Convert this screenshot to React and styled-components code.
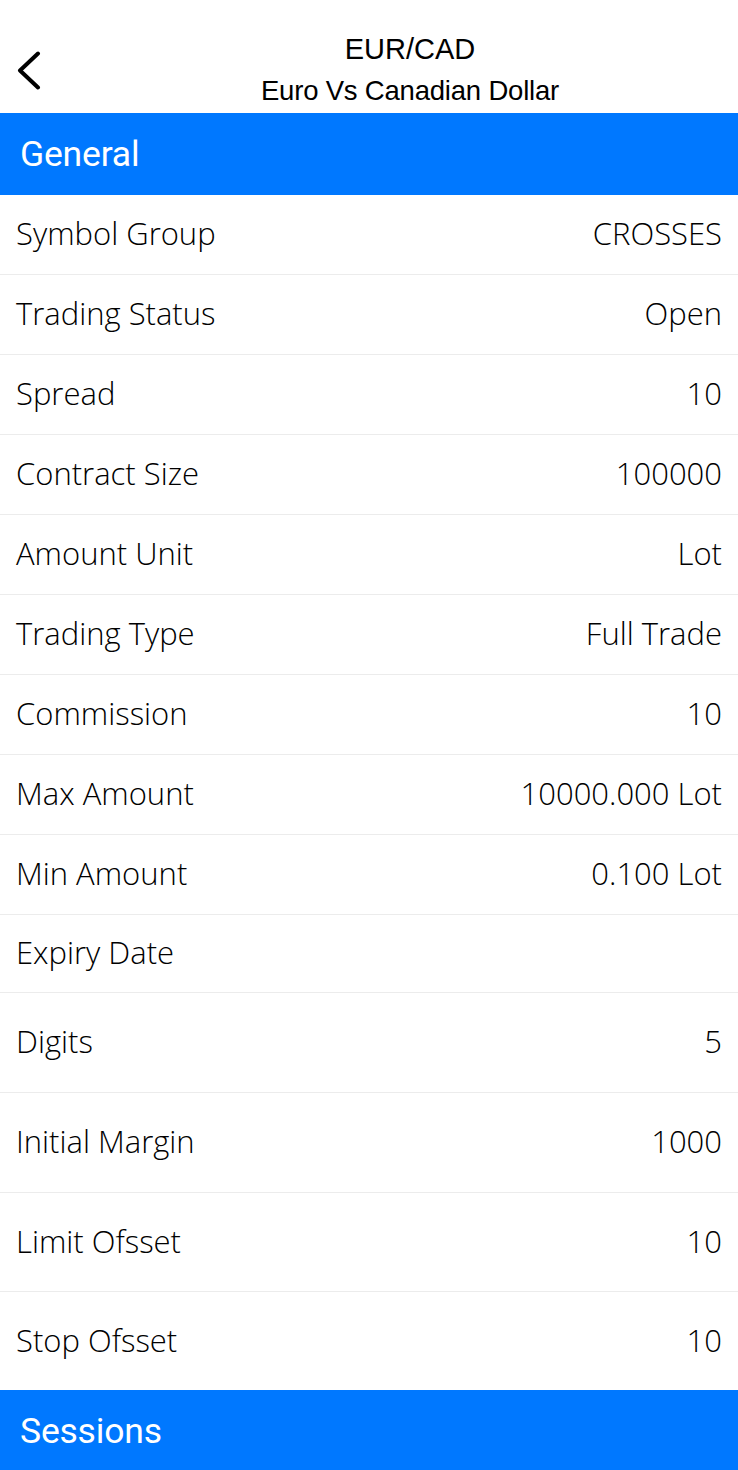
import React from 'react';
import styled, { createGlobalStyle } from 'styled-components';

const GlobalStyle = createGlobalStyle`
  html, body {
    margin: 0;
    padding: 0;
    background: #ffffff;
  }
  body {
    font-family: 'Open Sans', 'Noto Sans', sans-serif;
    color: #000;
  }
`;

const Screen = styled.div`
  width: 738px;
  height: 1470px;
  overflow: hidden;
  display: flex;
  flex-direction: column;
  background: #fff;
`;

const NavBar = styled.div`
  height: 113px;
  flex-shrink: 0;
  display: flex;
  align-items: stretch;
  padding-top: 28px;
  box-sizing: border-box;
`;

const BackButton = styled.button`
  width: 82px;
  border: 0;
  background: none;
  padding: 0 0 0 16px;
  display: flex;
  align-items: center;
  cursor: pointer;
`;

const TitleBlock = styled.div`
  flex: 1;
  display: flex;
  flex-direction: column;
  align-items: center;
  justify-content: center;
  font-family: 'Liberation Sans', Arial, sans-serif;
  color: #000;
`;

const Title = styled.div`
  font-size: 29px;
  line-height: 36px;
`;

const Subtitle = styled.div`
  margin-top: 4px;
  font-size: 27.5px;
  line-height: 40px;
  letter-spacing: -0.2px;
`;

const SectionBar = styled.div`
  height: 82px;
  flex-shrink: 0;
  background: #0078ff;
  color: #fff;
  display: flex;
  align-items: center;
  padding-left: 20px;
  font-family: 'Roboto', 'Liberation Sans', sans-serif;
  font-size: 35.5px;
  letter-spacing: -0.2px;
`;

const Row = styled.div`
  height: ${(p) => p.$h}px;
  flex-shrink: 0;
  box-sizing: border-box;
  display: flex;
  align-items: center;
  justify-content: space-between;
  padding: 0 16px 3px 16px;
  border-bottom: ${(p) => (p.$last ? 'none' : '1px solid #ececec')};
  font-family: 'Open Sans', 'Noto Sans', sans-serif;
  font-weight: 300;
  font-size: 31px;
  color: #000;
`;

const Label = styled.span``;
const Value = styled.span``;

const rows = [
  ['Symbol Group', 'CROSSES', 80],
  ['Trading Status', 'Open', 80],
  ['Spread', '10', 80],
  ['Contract Size', '100000', 80],
  ['Amount Unit', 'Lot', 80],
  ['Trading Type', 'Full Trade', 80],
  ['Commission', '10', 80],
  ['Max Amount', '10000.000 Lot', 80],
  ['Min Amount', '0.100 Lot', 80],
  ['Expiry Date', '', 78],
  ['Digits', '5', 100],
  ['Initial Margin', '1000', 100],
  ['Limit Ofsset', '10', 99],
  ['Stop Ofsset', '10', 98],
];

const Chevron = () => (
  <svg width="30" height="40" viewBox="0 0 30 40" fill="none">
    <path d="M22 2.5 L4 19.5 L22 36.5" stroke="#000" strokeWidth="4" strokeLinecap="round" strokeLinejoin="round" />
  </svg>
);

export default function App() {
  return (
    <>
      <GlobalStyle />
      <Screen>
        <NavBar>
          <BackButton aria-label="Back">
            <Chevron />
          </BackButton>
          <TitleBlock>
            <Title>EUR/CAD</Title>
            <Subtitle>Euro Vs Canadian Dollar</Subtitle>
          </TitleBlock>
        </NavBar>
        <SectionBar>General</SectionBar>
        {rows.map(([label, value, h], i) => (
          <Row key={label} $h={h} $last={i === rows.length - 1}>
            <Label>{label}</Label>
            <Value>{value}</Value>
          </Row>
        ))}
        <SectionBar>Sessions</SectionBar>
      </Screen>
    </>
  );
}
